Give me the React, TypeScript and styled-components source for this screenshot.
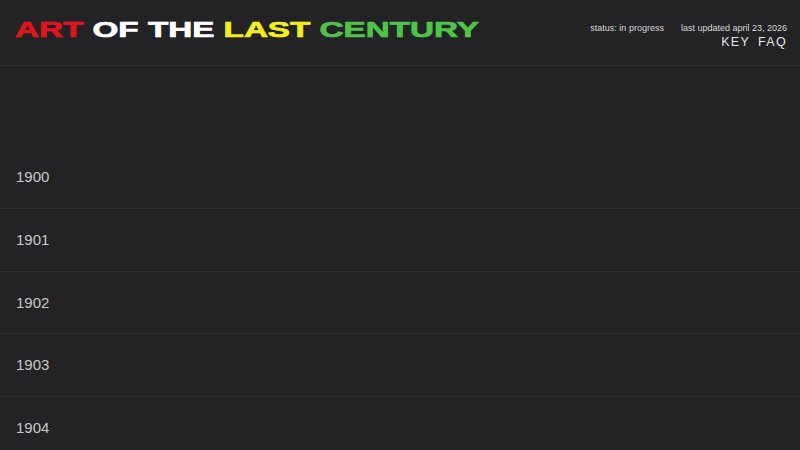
import React from 'react';
import styled, { createGlobalStyle } from 'styled-components';

const GlobalStyle = createGlobalStyle`
  html, body {
    margin: 0;
    padding: 0;
    background: #232224;
    font-family: "Liberation Sans", Arial, sans-serif;
    overflow: hidden;
  }
`;

const Page = styled.div`
  width: 800px;
  height: 450px;
  background: #232224;
  overflow: hidden;
`;

const Header = styled.header`
  height: 65px;
  border-bottom: 1px solid #313033;
  display: flex;
  justify-content: space-between;
  align-items: flex-start;
  padding: 0 13px 0 15px;
`;

const Title = styled.h1`
  margin: 17px 0 0;
  font-size: 22px;
  font-weight: 700;
  line-height: 26px;
  white-space: nowrap;
  transform: scaleX(1.51);
  transform-origin: left center;
  -webkit-text-stroke: 0.7px currentColor;
`;

const Word = styled.span<{ $color: string }>`
  color: ${(p) => p.$color};
`;

const Meta = styled.div`
  margin-top: 22px;
  display: flex;
  flex-direction: column;
  align-items: flex-end;
`;

const MetaRow = styled.div`
  display: flex;
  gap: 17px;
  font-size: 9px;
  color: #d8d8d8;
  line-height: 12px;
`;

const Nav = styled.nav`
  display: flex;
  gap: 8px;
  margin-top: 1px;
`;

const NavLink = styled.a`
  font-size: 12.5px;
  letter-spacing: 1.3px;
  color: #e6e6e6;
  text-decoration: none;
  line-height: 14px;
`;

const Spacer = styled.div`
  height: 79.5px;
`;

const YearRow = styled.div`
  box-sizing: border-box;
  height: 62.5px;
  display: flex;
  align-items: center;
  padding-left: 16px;
  font-size: 15px;
  color: #c9c9c9;
  & + & {
    border-top: 1px solid #313033;
  }
`;

const years = [1900, 1901, 1902, 1903, 1904];

export default function App() {
  return (
    <Page>
      <GlobalStyle />
      <Header>
        <Title>
          <Word $color="#e2141d">ART</Word> <Word $color="#ffffff">OF THE</Word>{' '}
          <Word $color="#f3ee1f">LAST</Word> <Word $color="#4fc44a">CENTURY</Word>
        </Title>
        <Meta>
          <MetaRow>
            <span>status: in progress</span>
            <span>last updated april 23, 2026</span>
          </MetaRow>
          <Nav>
            <NavLink href="#key">KEY</NavLink>
            <NavLink href="#faq">FAQ</NavLink>
          </Nav>
        </Meta>
      </Header>
      <Spacer />
      {years.map((y) => (
        <YearRow key={y}>{y}</YearRow>
      ))}
    </Page>
  );
}
